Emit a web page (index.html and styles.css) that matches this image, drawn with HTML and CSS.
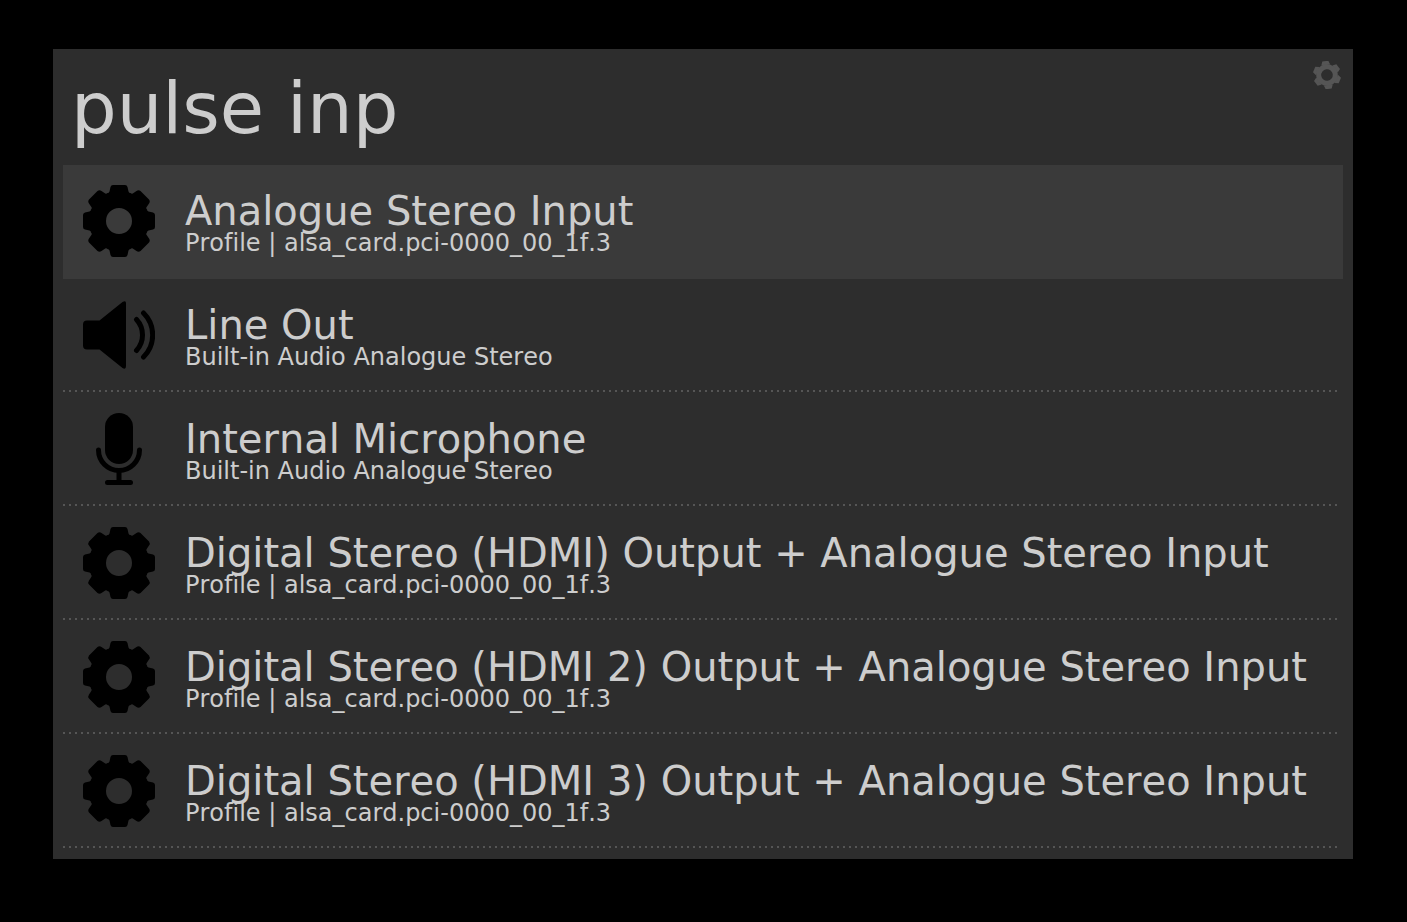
FILE: index.html
```html
<!DOCTYPE html>
<html lang="en">
<head>
<meta charset="utf-8">
<meta name="viewport" content="width=device-width, initial-scale=1">
<title>Launcher</title>
<link rel="stylesheet" href="styles.css">
</head>
<body>
<svg class="sprite" aria-hidden="true">
  <symbol id="gear" viewBox="0 0 72 72">
    <path fill-rule="evenodd" d="M30 0H42Q44 0 44.500 2L45.500 6.500Q46 8 47.500 8Q49 9.500 50.500 8L53.500 6Q55.500 4.500 57.500 6L66 14.500Q67.500 16.500 66 18.500L64 21.500Q62.500 23 64 24.500Q64 26 65.500 26.500L70 27.500Q72 28 72 30V42Q72 44 70 44.500L65.500 45.500Q64 46 64 47.500Q62.500 49 64 50.500L66 53.500Q67.500 55.500 66 57.500L57.500 66Q55.500 67.500 53.500 66L50.500 64Q49 62.500 47.500 64Q46 64 45.500 65.500L44.500 70Q44 72 42 72H30Q28 72 27.500 70L26.500 65.500Q26 64 24.500 64Q23 62.500 21.500 64L18.500 66Q16.500 67.500 14.500 66L6 57.500Q4.500 55.500 6 53.500L8 50.500Q9.500 49 8 47.500Q8 46 6.500 45.500L2 44.500Q0 44 0 42V30Q0 28 2 27.500L6.500 26.500Q8 26 8 24.500Q9.500 23 8 21.500L6 18.500Q4.500 16.500 6 14.500L14.500 6Q16.500 4.500 18.500 6L21.500 8Q23 9.500 24.500 8Q26 8 26.500 6.500L27.500 2Q28 0 30 0ZM36 23A13 13 0 1 0 36 49A13 13 0 1 0 36 23Z"/>
  </symbol>
  <symbol id="speaker" viewBox="0 0 72 72">
    <path d="M4 21.500H16.500L39.500 3Q43 1 43 4V67Q43 71 39.500 69L16.500 50.500H4Q0 50.500 0 46.500V25.500Q0 21.500 4 21.500Z"/>
    <path d="M53.500 20.500A23 23 0 0 1 53.500 51.500M60.500 14A31 31 0 0 1 60.500 58" fill="none" stroke="#000" stroke-width="5" stroke-linecap="round"/>
  </symbol>
  <symbol id="microphone" viewBox="0 0 72 72">
    <rect x="22" y="0" width="28" height="51" rx="14"/>
    <path d="M15.500 37A20.500 20.500 0 0 0 56.500 37M36 58V69M24.500 69.500H47.500" fill="none" stroke="#000" stroke-width="5" stroke-linecap="round"/>
  </symbol>
</svg>
<main class="launcher">
  <header class="search">
    <input class="search-input" type="text" value="pulse inp" aria-label="Search">
    <button class="settings" type="button" aria-label="Settings">
      <svg class="settings-icon" viewBox="0 0 28 28"><g transform="translate(14 14) rotate(-7)"><path id="tooth" d="M-4.500 -10L-3 -14H3L4.500 -10Z"/><use href="#tooth" transform="rotate(60)"/><use href="#tooth" transform="rotate(120)"/><use href="#tooth" transform="rotate(180)"/><use href="#tooth" transform="rotate(240)"/><use href="#tooth" transform="rotate(300)"/><circle r="8.300" fill="none" stroke="#555" stroke-width="5"/></g></svg>
    </button>
  </header>
  <ul class="results">
    <li class="result selected"><svg class="icon"><use href="#gear"/></svg><div class="text"><span class="title">Analogue Stereo Input</span><span class="subtitle">Profile | alsa_card.pci-0000_00_1f.3</span></div></li>
    <li class="result"><svg class="icon"><use href="#speaker"/></svg><div class="text"><span class="title">Line Out</span><span class="subtitle">Built-in Audio Analogue Stereo</span></div></li>
    <li class="result"><svg class="icon"><use href="#microphone"/></svg><div class="text"><span class="title">Internal Microphone</span><span class="subtitle">Built-in Audio Analogue Stereo</span></div></li>
    <li class="result"><svg class="icon"><use href="#gear"/></svg><div class="text"><span class="title">Digital Stereo (HDMI) Output + Analogue Stereo Input</span><span class="subtitle">Profile | alsa_card.pci-0000_00_1f.3</span></div></li>
    <li class="result"><svg class="icon"><use href="#gear"/></svg><div class="text"><span class="title">Digital Stereo (HDMI 2) Output + Analogue Stereo Input</span><span class="subtitle">Profile | alsa_card.pci-0000_00_1f.3</span></div></li>
    <li class="result"><svg class="icon"><use href="#gear"/></svg><div class="text"><span class="title">Digital Stereo (HDMI 3) Output + Analogue Stereo Input</span><span class="subtitle">Profile | alsa_card.pci-0000_00_1f.3</span></div></li>
  </ul>
</main>
</body>
</html>
```
FILE: styles.css
```css
* {
  box-sizing: border-box;
}

body {
  margin: 0;
  padding: 49px 54px 49px 53px;
  background: #000;
  color: #cdcdcd;
  font-family: "DejaVu Sans", sans-serif;
  font-variant-ligatures: none;
  font-kerning: none;
}

.sprite {
  position: absolute;
  width: 0;
  height: 0;
}

.launcher {
  padding: 10px;
  background: #2d2d2d;
}

.search {
  display: flex;
  align-items: flex-start;
  padding-bottom: 8px;
}

.search-input {
  flex: 1;
  min-width: 0;
  height: 98px;
  padding: 0 8px;
  border: 0;
  outline: 0;
  background: none;
  color: inherit;
  font: 72px "DejaVu Sans", sans-serif;
}

.settings {
  display: flex;
  padding: 2px;
  border: 0;
  background: none;
  cursor: pointer;
}

.settings-icon {
  width: 28px;
  height: 28px;
  fill: #555;
}

.results {
  margin: 0;
  padding: 0;
  list-style: none;
}

.result {
  display: flex;
  align-items: flex-start;
  gap: 30px;
  height: 114px;
  padding: 20px;
  background: repeating-linear-gradient(to right, #555 0 2px, transparent 2px 6px) 0 111px / calc(100% - 5px) 2px no-repeat;
}

.result.selected {
  background: #3a3a3a;
}

.icon {
  flex: none;
  width: 72px;
  height: 72px;
}

.text {
  display: flex;
  flex-direction: column;
  padding-top: 2px;
  white-space: nowrap;
}

.title {
  font-size: 40px;
  line-height: 48px;
}

.subtitle {
  font-size: 24px;
  line-height: 16px;
}
```
